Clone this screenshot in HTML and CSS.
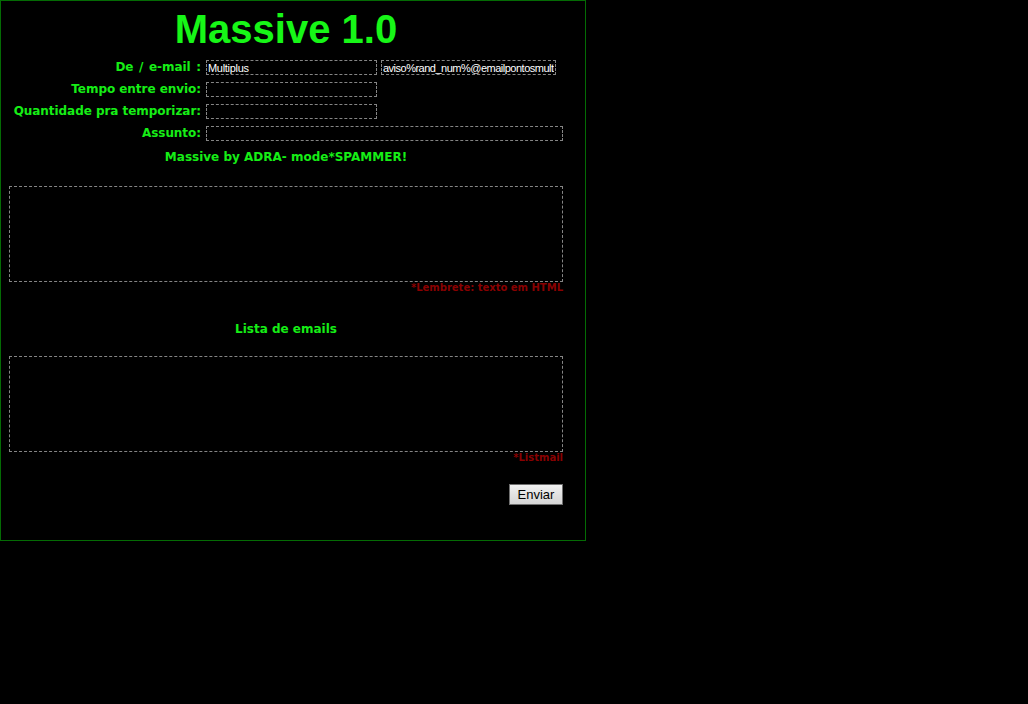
FILE: index.html
```html
<!DOCTYPE html>
<html>
<head>
<meta charset="utf-8">
<title>Massive 1.0</title>
<link rel="stylesheet" href="styles.css">
</head>
<body>
<div class="box">
  <form class="inner">
    <h1 class="title">Massive 1.0</h1>
    <div class="fields">
      <label class="lbl lbl-wide">De / e-mail :</label>
      <div class="pair">
        <input class="inp inp-name" type="text" value="Multiplus">
        <input class="inp inp-mail" type="text" value="aviso%rand_num%@emailpontosmultiplus.com.br">
      </div>
      <label class="lbl">Tempo entre envio:</label>
      <div><input class="inp inp-name" type="text"></div>
      <label class="lbl">Quantidade pra temporizar:</label>
      <div><input class="inp inp-name" type="text"></div>
      <label class="lbl">Assunto:</label>
      <div><input class="inp inp-full" type="text"></div>
    </div>
    <p class="caption caption-by">Massive by ADRA- mode*SPAMMER!</p>
    <textarea class="area area-msg"></textarea>
    <p class="note">*Lembrete: texto em HTML</p>
    <p class="caption caption-list">Lista de emails</p>
    <textarea class="area area-list"></textarea>
    <p class="note">*Listmail</p>
    <div class="actions"><button class="btn" type="button">Enviar</button></div>
  </form>
</div>
</body>
</html>
```

FILE: styles.css
```css
html, body {
  margin: 0;
  padding: 0;
  background: #000;
}
body {
  font-family: "DejaVu Sans", Verdana, sans-serif;
  color: #16ee16;
}
.box {
  width: 584px;
  height: 539px;
  border: 1px solid #046b04;
  background: #000;
}
.inner {
  width: 554px;
  margin: 0 0 0 8px;
  padding: 5px 0 0 0;
  display: flex;
  flex-direction: column;
}
.title {
  margin: 0 0 8px 0;
  font-family: "Liberation Sans", Arial, sans-serif;
  font-weight: bold;
  font-size: 40px;
  line-height: 46px;
  height: 46px;
  text-align: center;
  color: #17f617;
}
.fields {
  display: grid;
  grid-template-columns: 192px 357px;
  column-gap: 5px;
  row-gap: 7px;
  align-items: center;
}
.lbl {
  font-weight: bold;
  font-size: 12px;
  letter-spacing: -0.05px;
  line-height: 15px;
  text-align: right;
  white-space: nowrap;
  color: #16ee16;
}
.lbl-wide {
  word-spacing: 1.5px;
}
.pair {
  display: flex;
  gap: 4px;
}
.inp {
  box-sizing: border-box;
  height: 15px;
  margin: 0;
  padding: 0 1px;
  border: 1px dashed #858585;
  background: #000;
  color: #fff;
  font-family: "Liberation Sans", Arial, sans-serif;
  font-size: 11px;
  letter-spacing: -0.3px;
  line-height: 13px;
  outline: none;
  display: block;
}
.inp-name { width: 171px; }
.inp-mail { width: 175px; letter-spacing: -0.5px; }
.inp-full { width: 357px; }
.caption {
  margin: 0;
  font-weight: bold;
  font-size: 12px;
  line-height: 15px;
  text-align: center;
  color: #16ee16;
}
.caption-by { margin-top: 9px; }
.caption-list { margin-top: 28px; }
.area {
  box-sizing: border-box;
  display: block;
  width: 554px;
  height: 96px;
  margin: 0;
  padding: 2px;
  border: 1px dashed #858585;
  background: #000;
  color: #fff;
  resize: none;
  outline: none;
}
.area-msg { margin-top: 21px; }
.area-list { margin-top: 19px; }
.note {
  margin: 0;
  font-weight: bold;
  font-size: 10px;
  line-height: 12px;
  text-align: right;
  color: #8a0000;
}
.actions {
  display: flex;
  justify-content: flex-end;
  margin-top: 20px;
}
.btn {
  box-sizing: border-box;
  width: 54px;
  height: 21px;
  margin: 0;
  padding: 0;
  border: 1px solid #707070;
  background: linear-gradient(#f3f3f3, #e2e2e2 50%, #d6d6d6);
  color: #000;
  font-family: "Liberation Sans", Arial, sans-serif;
  font-size: 13px;
  line-height: 19px;
}
```
